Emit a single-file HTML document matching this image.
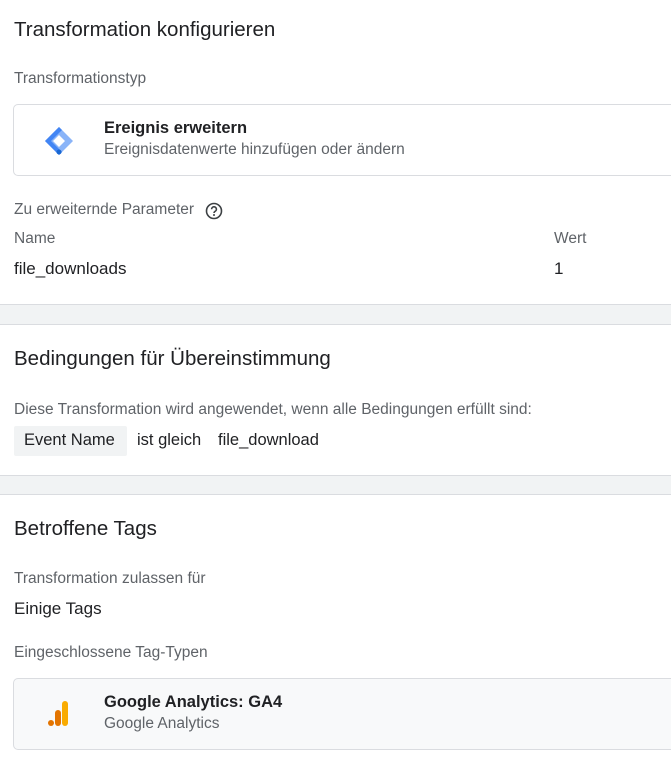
<!DOCTYPE html>
<html><head><meta charset="utf-8">
<style>
*{margin:0;padding:0;box-sizing:border-box}
body{width:671px;height:760px;background:#f1f3f4;font-family:"Liberation Sans",Arial,sans-serif;color:#202124;position:relative;overflow:hidden}
.card{position:absolute;left:0;width:671px;background:#fff;border-top:1px solid #dadce0;border-bottom:1px solid #dadce0}
.t{position:absolute;white-space:nowrap}
.h{font-size:20.5px;color:#202124}
.l{font-size:15.5px;color:#5f6368}
.v{font-size:17px;color:#202124}
.box{position:absolute;left:13px;width:670px;border:1px solid #dadce0;border-radius:5px}
.bt{font-size:16.5px;font-weight:bold;color:#202124}
.bs{font-size:15.5px;color:#5f6368}
</style></head><body>
<div class="card" style="top:-1px;height:306px;border-top:none">
  <div class="t h" style="left:14px;top:19px">Transformation konfigurieren</div>
  <div class="t l" style="left:14px;top:71px">Transformationstyp</div>
  <div class="box" style="top:105px;height:72px;background:#fff">
    <svg style="position:absolute;left:29px;top:20px" width="32" height="32" viewBox="0 0 32 32">
      <path d="M16 2 L30 16 L16 30 L2 16 Z M16 10 L10 16 L16 22 L22 16 Z" fill="#8ab4f8" fill-rule="evenodd"/>
      <path d="M16 2 L2 16 L16 30 L19 27 L8 16 L19 5 Z" fill="#4285f4"/>
      <circle cx="16" cy="27" r="2.5" fill="#1967d2"/>
    </svg>
    <div class="t bt" style="left:90px;top:14px">Ereignis erweitern</div>
    <div class="t bs" style="left:90px;top:36px">Ereignisdatenwerte hinzufügen oder ändern</div>
  </div>
  <div class="t l" style="left:14px;top:202px">Zu erweiternde Parameter</div>
  <svg style="position:absolute;left:205px;top:203px" width="18" height="18" viewBox="0 0 18 18"><circle cx="9" cy="9" r="7.5" fill="none" stroke="#3c4043" stroke-width="1.6"/><path d="M6.6 7.2a2.4 2.4 0 1 1 3.4 2.2c-.7.4-1 .8-1 1.6" fill="none" stroke="#3c4043" stroke-width="1.6"/><circle cx="9" cy="13" r="1" fill="#3c4043"/></svg>
  <div class="t l" style="left:14px;top:231px">Name</div>
  <div class="t l" style="left:554px;top:231px">Wert</div>
  <div class="t v" style="left:14px;top:260px">file_downloads</div>
  <div class="t v" style="left:554px;top:260px">1</div>
</div>
<div class="card" style="top:324px;height:152px">
  <div class="t h" style="left:14px;top:22px">Bedingungen für Übereinstimmung</div>
  <div class="t l" style="left:14px;top:76px">Diese Transformation wird angewendet, wenn alle Bedingungen erfüllt sind:</div>
  <div style="position:absolute;left:14px;top:101px;width:113px;height:30px;background:#f1f3f4;border-radius:2px"></div>
  <div class="t v" style="left:24px;top:106px;font-size:16.5px">Event Name</div>
  <div class="t v" style="left:137px;top:106px;font-size:16.5px">ist gleich</div>
  <div class="t v" style="left:218px;top:106px;font-size:16.5px">file_download</div>
</div>
<div class="card" style="top:494px;height:270px;border-bottom:none">
  <div class="t h" style="left:14px;top:22px">Betroffene Tags</div>
  <div class="t l" style="left:14px;top:75px">Transformation zulassen für</div>
  <div class="t v" style="left:14px;top:104px">Einige Tags</div>
  <div class="t l" style="left:14px;top:149px">Eingeschlossene Tag-Typen</div>
  <div class="box" style="top:183px;height:72px;background:#f8f9fa">
    <svg style="position:absolute;left:32px;top:20px" width="28" height="30" viewBox="0 0 28 30">
      <rect x="16" y="2" width="6" height="25" rx="3" fill="#f9ab00"/>
      <rect x="9" y="11" width="6" height="16" rx="3" fill="#e37400"/>
      <circle cx="5" cy="24" r="3" fill="#e37400"/>
    </svg>
    <div class="t bt" style="left:90px;top:14px">Google Analytics: GA4</div>
    <div class="t bs" style="left:90px;top:36px">Google Analytics</div>
  </div>
</div>
</body></html>
